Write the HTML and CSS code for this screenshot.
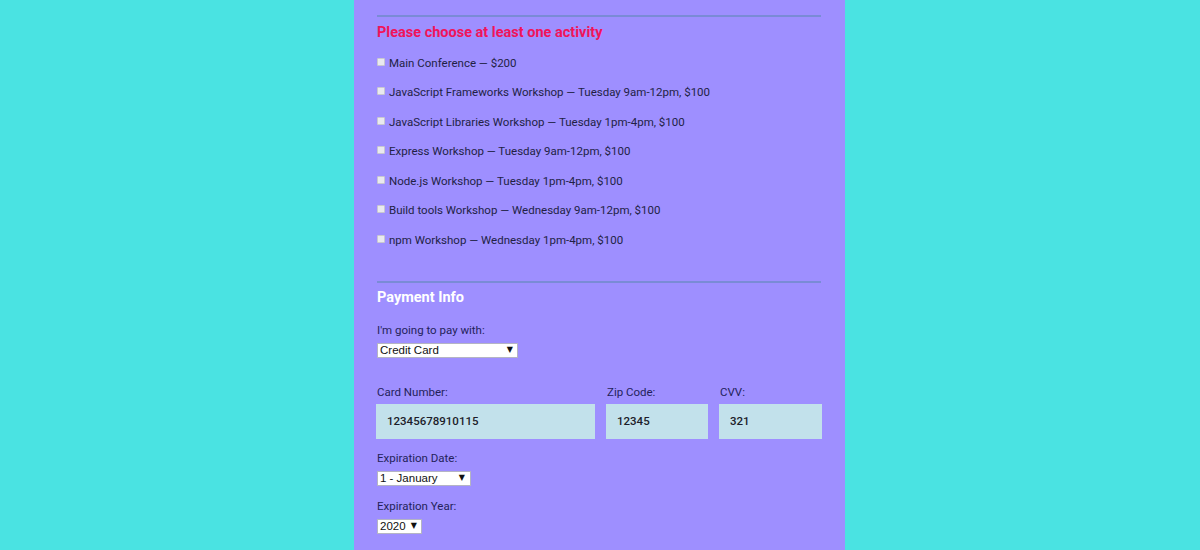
FILE: index.html
```html
<!DOCTYPE html>
<html lang="en">
<head>
<meta charset="utf-8">
<title>Register</title>
<link rel="stylesheet" href="styles.css">
</head>
<body>
<main class="panel">
  <section class="activities">
    <div class="rule"></div>
    <h2 class="title title-error">Please choose at least one activity</h2>
    <ul class="activity-list">
      <li><label class="activity"><input type="checkbox" class="check"><span>Main Conference — $200</span></label></li>
      <li><label class="activity"><input type="checkbox" class="check"><span>JavaScript Frameworks Workshop — Tuesday 9am-12pm, $100</span></label></li>
      <li><label class="activity"><input type="checkbox" class="check"><span>JavaScript Libraries Workshop — Tuesday 1pm-4pm, $100</span></label></li>
      <li><label class="activity"><input type="checkbox" class="check"><span>Express Workshop — Tuesday 9am-12pm, $100</span></label></li>
      <li><label class="activity"><input type="checkbox" class="check"><span>Node.js Workshop — Tuesday 1pm-4pm, $100</span></label></li>
      <li><label class="activity"><input type="checkbox" class="check"><span>Build tools Workshop — Wednesday 9am-12pm, $100</span></label></li>
      <li><label class="activity"><input type="checkbox" class="check"><span>npm Workshop — Wednesday 1pm-4pm, $100</span></label></li>
    </ul>
  </section>
  <section class="payment">
    <div class="rule"></div>
    <h2 class="title title-light">Payment Info</h2>
    <label class="label label-pay">I'm going to pay with:</label>
    <span class="select-wrap select-pay"><select class="select"><option>Credit Card</option></select></span>
    <div class="card-grid">
      <div class="field">
        <label class="label">Card Number:</label>
        <input class="text-input" type="text" value="12345678910115">
      </div>
      <div class="field">
        <label class="label">Zip Code:</label>
        <input class="text-input" type="text" value="12345">
      </div>
      <div class="field">
        <label class="label">CVV:</label>
        <input class="text-input" type="text" value="321">
      </div>
    </div>
    <label class="label label-exp">Expiration Date:</label>
    <span class="select-wrap select-month"><select class="select"><option>1 - January</option></select></span>
    <label class="label label-year">Expiration Year:</label>
    <span class="select-wrap select-year"><select class="select"><option>2020</option></select></span>
  </section>
</main>
</body>
</html>
```
FILE: styles.css
```css
* { box-sizing: border-box; }
html, body { margin: 0; padding: 0; }
body {
  background: #4ae3e2;
  font-family: Roboto, "Liberation Sans", Arial, sans-serif;
  height: 550px;
  overflow: hidden;
}
.panel {
  width: 491px;
  margin: 0 0 0 354px;
  background: #9e8fff;
  padding: 15px 23px 40px 22px;
  min-height: 550px;
}
.rule {
  height: 2px;
  background: #7a8bd6;
  margin: 0 1px 0 1px;
}
.title {
  margin: 7px 0 0 1px;
  font-size: 14.5px;
  line-height: 18px;
  font-weight: 700;
}
.title-error { color: #f0145a; }
.title-light { color: #ffffff; margin-top: 6px; }
.activity-list {
  list-style: none;
  margin: 6px 0 0 0;
  padding: 0;
}
.activity-list li {
  height: 29.5px;
  display: flex;
  align-items: center;
}
.activity {
  display: flex;
  align-items: center;
  font-size: 11.5px;
  color: #221f45;
  margin-left: 1px;
}
.check {
  appearance: none;
  -webkit-appearance: none;
  width: 8px;
  height: 8px;
  margin: 0 4px 2px 0;
  background: #e9e9ef;
  border: 1px solid #c8c8d0;
  border-radius: 1px;
}
.payment { margin-top: 26px; }
.label {
  display: block;
  font-size: 11.5px;
  line-height: 16px;
  color: #241f5a;
  margin-left: 1px;
}
.label-pay { margin-top: 15px; }
.select-wrap {
  position: relative;
  display: block;
  margin-left: 1px;
  margin-top: 5px;
  height: 15px;
}
.select-wrap::after {
  content: "▼";
  position: absolute;
  top: 2px;
  font-size: 8px;
  line-height: 10px;
  color: #111;
  pointer-events: none;
  font-family: "DejaVu Sans", sans-serif;
}
.select {
  appearance: none;
  -webkit-appearance: none;
  display: block;
  width: 100%;
  height: 15px;
  margin: 0;
  padding: 0 0 0 2px;
  border: 1px solid #b4b4c4;
  border-radius: 0;
  background: #ffffff;
  font-family: "Liberation Sans", Arial, sans-serif;
  font-size: 11.5px;
  line-height: 13px;
  color: #111;
}
.select-pay { width: 141px; }
.select-pay::after { right: 5px; }
.select-month { width: 94px; }
.select-month::after { right: 6px; }
.select-year { width: 45px; }
.select-year::after { right: 5px; }
.card-grid {
  display: grid;
  grid-template-columns: 219px 102px 103px;
  column-gap: 11px;
  margin-top: 26px;
}
.text-input {
  display: block;
  width: 100%;
  height: 35px;
  margin-top: 4px;
  border: none;
  background: #c2e1eb;
  padding: 0 0 0 11px;
  font-family: Roboto, "Liberation Sans", sans-serif;
  font-size: 11.5px;
  font-weight: 500;
  color: #1d1d2a;
}
.label-exp { margin-top: 11px; }
.label-year { margin-top: 12px; }
```
